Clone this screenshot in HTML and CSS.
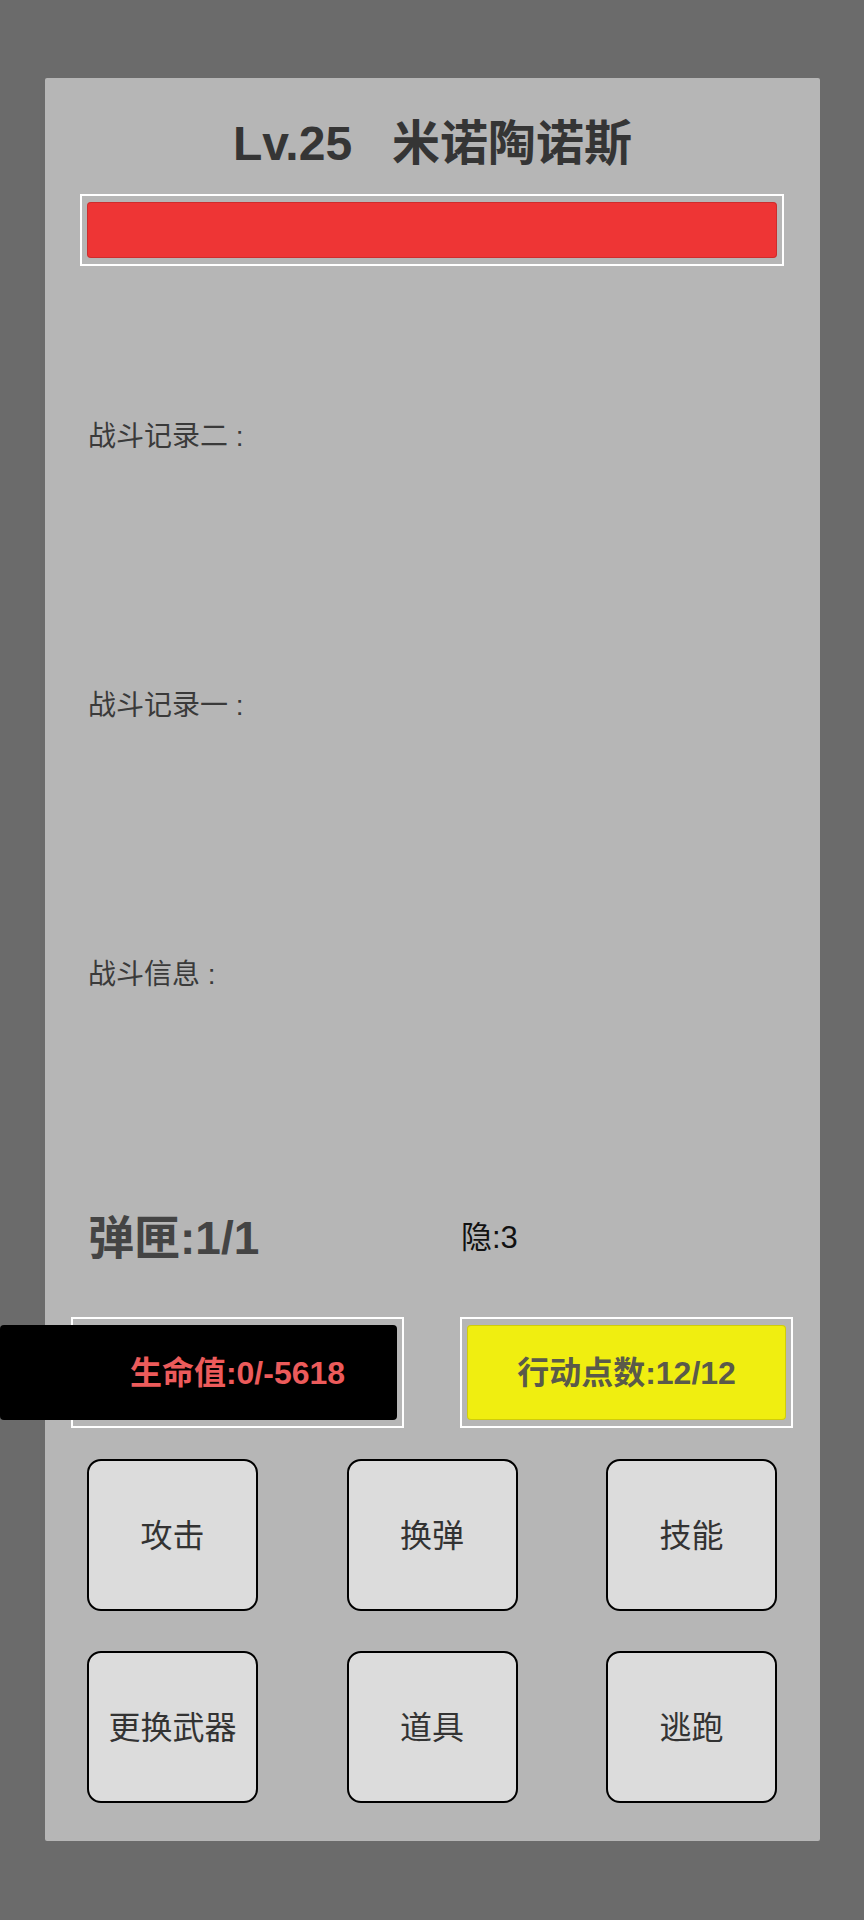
FILE: index.html
```html
<!DOCTYPE html>
<html lang="zh-CN">
<head>
    <meta charset="UTF-8">
    <meta name="viewport" content="width=device-width, initial-scale=1.0">
    <title>战斗</title>
    <link rel="stylesheet" href="styles.css">
</head>
<body>
    <div class="battle">
        <h1 class="enemy-name">Lv.25&nbsp;&nbsp;&nbsp;米诺陶诺斯</h1>

        <div class="hp-frame">
            <div class="hp-fill"></div>
        </div>

        <div class="log log-first">
            <div class="log-title">战斗记录二 :</div>
            <div class="log-body"></div>
        </div>
        <div class="log">
            <div class="log-title">战斗记录一 :</div>
            <div class="log-body"></div>
        </div>
        <div class="log">
            <div class="log-title">战斗信息 :</div>
        </div>

        <div class="ammo-row">
            <span class="ammo">弹匣:1/1</span>
            <span class="stealth">隐:3</span>
        </div>

        <div class="status-row">
            <div class="status-box">
                <div class="status-fill life-fill"></div>
                <div class="status-label life-label">生命值:0/-5618</div>
            </div>
            <div class="status-box">
                <div class="status-fill action-fill"></div>
                <div class="status-label action-label">行动点数:12/12</div>
            </div>
        </div>

        <div class="actions">
            <button>攻击</button>
            <button>换弹</button>
            <button>技能</button>
            <button>更换武器</button>
            <button>道具</button>
            <button>逃跑</button>
        </div>
    </div>
</body>
</html>
```

FILE: styles.css
```css
body {
    margin: 0;
    background-color: #6b6b6b;
    font-family: "Liberation Sans", "Noto Sans CJK SC", sans-serif;
    overflow-x: hidden;
}
.battle {
    box-sizing: border-box;
    width: 775px;
    height: 1763px;
    margin: 78px 0 0 45px;
    padding: 38px 0 38px;
    background-color: #b6b6b6;
    border-radius: 2px;
    display: flex;
    flex-direction: column;
}
.enemy-name {
    margin: 0;
    font-size: 48px;
    line-height: 56px;
    font-weight: bold;
    color: #353535;
    text-align: center;
}
.hp-frame {
    margin: 22px 36px 0 35px;
    padding: 6px 5px;
    border: 2px solid #fff;
}
.hp-fill {
    height: 56px;
    background-color: #ee3535;
    border-radius: 4px;
    box-shadow: inset 0 0 0 1px rgba(150,30,30,0.35);
}
.log {
    padding-left: 43px;
}
.log-first {
    margin-top: 151px;
}
.log-title {
    font-size: 28px;
    line-height: 40px;
    color: #3a3a3a;
}
.log-body {
    height: 229px;
}
.ammo-row {
    display: flex;
    align-items: center;
    margin-top: 211px;
    padding-left: 43px;
    height: 56px;
}
.ammo {
    width: 373px;
    font-size: 46px;
    font-weight: bold;
    color: #444;
}
.stealth {
    font-size: 31px;
    color: #111;
}
.status-row {
    display: flex;
    justify-content: space-between;
    margin: 55px 27px 0 26px;
}
.status-box {
    position: relative;
    box-sizing: border-box;
    width: 333px;
    height: 111px;
    padding: 6px 5px;
    border: 2px solid #fff;
}
.status-fill {
    height: 95px;
    border-radius: 4px;
}
.life-fill {
    background-color: #000;
    margin-left: -78px;
}
.action-fill {
    background-color: #f0ee10;
    box-shadow: inset 0 0 0 1px rgba(150,140,0,0.35);
}
.status-label {
    position: absolute;
    inset: 0 0 5px;
    display: flex;
    align-items: center;
    justify-content: center;
    font-size: 32px;
    font-weight: bold;
}
.life-label {
    color: #ec5b5b;
}
.action-label {
    color: #5a5a4a;
}
.actions {
    display: grid;
    grid-template-columns: repeat(3, 171px);
    justify-content: space-between;
    row-gap: 40px;
    margin: 31px 43px 0 42px;
}
button {
    box-sizing: border-box;
    height: 152px;
    padding: 0 0 4px;
    background-color: #dcdcdc;
    border: 2px solid #000;
    border-radius: 14px;
    font-family: "Liberation Sans", "Noto Sans CJK SC", sans-serif;
    font-size: 32px;
    color: #333;
}
```
